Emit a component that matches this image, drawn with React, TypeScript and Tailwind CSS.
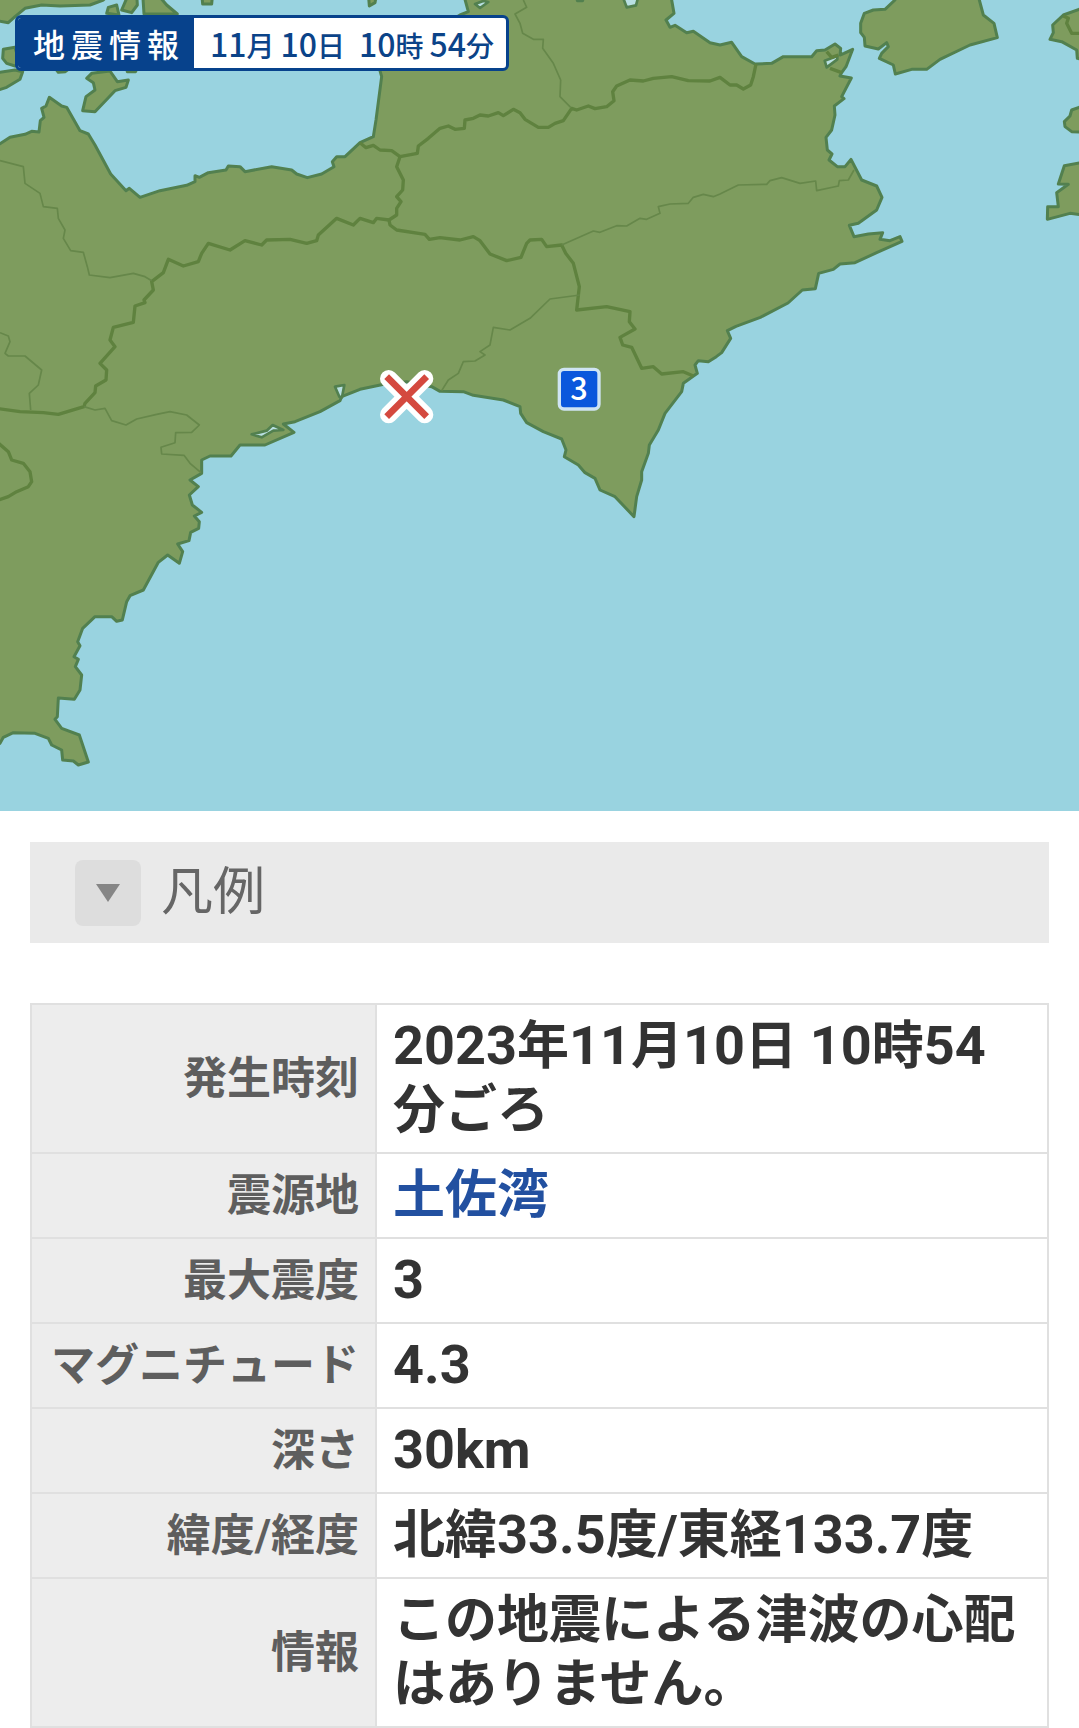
import { useState } from "react";

interface QuakeRow {
  label: string;
  value: string;
  href?: string;
}

const rows: QuakeRow[] = [
  { label: "発生時刻", value: "2023年11月10日 10時54分ごろ" },
  { label: "震源地", value: "土佐湾", href: "#tosa" },
  { label: "最大震度", value: "3" },
  { label: "マグニチュード", value: "4.3" },
  { label: "深さ", value: "30km" },
  { label: "緯度/経度", value: "北緯33.5度/東経133.7度" },
  { label: "情報", value: "この地震による津波の心配はありません。" },
];

const dateParts = [
  { num: "11", unit: "月" },
  { num: "10", unit: "日" },
];

const timeParts = [
  { num: "10", unit: "時" },
  { num: "54", unit: "分" },
];

// Land masses, three map units to one pixel at full width
const land = [
  // Shikoku
  "-20,431 0,431 30,412 75,403 95,394 117,396 121,362 132,352 125,325 138,318 148,292 185,318 200,322 240,392 265,402 285,435 332,522 378,572 388,565 420,592 480,572 560,556 585,545 585,527 598,532 625,518 678,510 685,498 720,500 735,515 815,500 875,510 890,522 922,533 965,522 1002,500 997,485 1010,470 1035,470 1080,428 1120,410 1128,360 1145,230 1138,205 1250,120 1380,45 1405,35 1390,-20 2010,-20 2015,0 2022,40 1998,60 2010,82 2025,76 2060,98 2080,94 2130,128 2160,135 2195,127 2225,170 2265,192 2315,190 2350,170 2435,170 2450,152 2475,150 2505,132 2522,145 2520,165 2532,160 2558,148 2538,200 2525,218 2520,228 2554,234 2525,290 2532,296 2503,318 2505,345 2495,390 2478,412 2482,450 2496,462 2487,480 2512,500 2535,500 2553,478 2585,540 2630,558 2646,592 2630,630 2575,670 2548,676 2562,710 2605,702 2648,698 2640,718 2670,722 2700,710 2706,724 2630,758 2565,788 2520,792 2500,808 2456,820 2446,866 2407,870 2364,909 2281,952 2208,979 2182,992 2192,1015 2165,1058 2149,1070 2125,1085 2095,1082 2085,1095 2092,1120 2050,1150 2045,1175 1995,1240 1975,1290 1948,1335 1945,1360 1925,1415 1925,1440 1910,1490 1902,1550 1845,1490 1800,1470 1785,1435 1755,1418 1735,1395 1693,1370 1698,1350 1685,1317 1630,1295 1580,1268 1562,1240 1560,1220 1510,1200 1420,1186 1390,1175 1320,1174 1295,1160 1220,1145 1155,1152 1080,1168 1025,1190 1020,1202 960,1235 885,1265 850,1272 882,1297 795,1335 720,1335 693,1368 630,1368 605,1380 605,1420 570,1440 595,1460 568,1485 577,1515 605,1537 583,1548 598,1565 596,1585 572,1597 567,1622 533,1632 548,1655 538,1690 503,1665 475,1687 430,1770 390,1787 380,1805 367,1860 350,1864 335,1850 285,1850 248,1885 233,1925 240,1937 222,1970 235,1978 226,2000 245,2025 240,2070 223,2098 175,2094 172,2150 165,2158 185,2185 238,2205 265,2286 235,2295 220,2283 188,2280 185,2250 155,2235 145,2215 105,2200 40,2198 10,2212 0,2230 -20,2240",
  // Seto islands
  "-20,-20 330,-20 310,0 270,15 180,18 125,15 75,25 45,50 25,68 -20,60",
  "320,40 325,22 350,15 357,45",
  "365,30 378,0 378,-20 410,-20 412,15 395,38",
  "428,-20 432,42 532,42 500,15 470,-20",
  "605,-20 638,-20 635,12 608,12",
  "1105,-20 1130,-20 1125,8 1108,18",
  "1730,-20 1750,-20 1748,2 1732,2",
  "10,148 45,142 60,195 45,198 20,190 8,175",
  "-20,215 0,217 45,210 68,215 60,238 20,262 -20,275",
  "168,208 205,208 196,215 175,217",
  "380,205 410,205 407,215 382,215",
  "260,235 275,220 330,213 352,245 385,240 378,262 345,272 285,335 248,332 258,290 285,270 280,248",
  // Awaji
  "2685,-20 2685,0 2655,28 2620,30 2593,40 2582,70 2582,98 2593,112 2595,138 2635,147 2660,128 2665,140 2645,160 2638,175 2680,195 2686,222 2735,208 2780,208 2820,178 2910,135 2992,113 2982,70 2950,45 2938,0 2938,-20",
  // Kii peninsula
  "3260,25 3237,28 3190,45 3158,75 3160,98 3150,118 3185,125 3230,150 3232,175 3260,180",
  "3260,320 3237,322 3215,330 3210,348 3193,365 3195,380 3215,395 3260,397",
  "3260,485 3193,497 3175,552 3205,553 3170,578 3175,620 3143,620 3142,658 3210,640 3260,647",
];

const bays = [
  "1425,12 1450,3 1465,6 1440,24",
  "1868,-10 1880,22 1908,16 1915,-10",
  "2474,182 2512,168 2512,178 2480,202",
  "1005,1160 1033,1155 1026,1192 1018,1190",
  "755,1303 800,1292 818,1275 850,1290 820,1292 785,1312",
];

const prefectureLines = [
  "1080,428 1098,443 1120,436 1140,450 1175,452 1200,470 1252,460 1255,438 1285,415 1320,385 1345,378 1365,388 1393,385 1395,360 1420,355 1440,345 1465,348 1495,338 1510,347 1540,328 1560,338 1575,358 1615,382 1645,382 1665,370 1690,362 1715,325 1730,330 1765,318 1785,326 1820,320 1842,302 1838,275 1850,258 1890,240 1930,243 1960,235 2015,230 2065,242 2130,243 2160,232 2190,255 2210,255 2230,267 2252,255 2260,230 2268,192",
  "1200,470 1190,500 1210,540 1208,570 1190,590 1203,605 1190,625 1190,645 1167,660 1170,675 1190,690 1275,703 1288,718 1320,713 1380,720 1420,710 1440,722 1470,762 1520,782 1563,772 1580,730 1590,720 1625,718 1640,740 1685,735 1697,760 1720,790 1738,860 1730,930 1820,920 1890,935 1888,965 1905,987 1860,1012 1868,1035 1895,1042 1925,1105 1960,1100 1985,1122 2050,1115 2080,1128",
  "1167,660 1130,655 1120,668 1080,655 1060,675 1010,655 955,705 950,722 920,730 870,718 800,720 785,735 735,722 690,750 625,730 605,760 595,785 550,798 505,778 490,818 455,845 460,870 432,900 435,908 405,918 400,967 340,982 330,1020 345,1040 300,1090 320,1110 318,1140 287,1158 285,1178 255,1210 252,1220 175,1243 130,1238 60,1235 -10,1225",
  "-10,1325 25,1355 35,1380 70,1390 90,1415 95,1445 85,1460 50,1475 25,1490 -10,1502",
  "3260,100 3215,100 3200,70 3205,55 3190,48",
  "2480,155 2495,172 2515,165",
  "2490,205 2525,218",
];

const areaLines = [
  "0,482 70,500 75,550 120,580 130,620 172,625 175,655 195,690 190,715 212,752 250,757 262,800 268,825 330,833 400,820 435,830 455,842",
  "0,998 25,1008 30,1025 15,1060 25,1068 75,1068 125,1110 115,1155 88,1180 92,1230",
  "252,1220 285,1230 315,1225 335,1262 378,1275 410,1257 470,1243 510,1235 560,1245 598,1275 575,1297 527,1298 525,1328 483,1342 485,1362 552,1366 570,1390 603,1418",
  "1570,0 1580,22 1545,42 1560,70 1568,100 1600,118 1630,118 1628,145 1660,190 1682,240 1680,290 1712,322",
  "1685,735 1780,693 1800,697 1850,677 1880,678 1920,655 1940,658 1980,640 1975,620 2010,612 2065,610 2080,592 2110,583 2140,590 2160,582 2215,555 2300,553 2310,542 2345,533 2400,550 2447,543 2450,572 2515,558 2518,542 2545,540 2562,510",
  "1740,885 1650,897 1590,955 1530,990 1480,982 1470,1035 1440,1055 1455,1065 1425,1083 1390,1085 1375,1120 1345,1140 1325,1172",
];

function QuakeMap() {
  return (
    <svg viewBox="0 0 3237 2433" className="block w-full bg-[#99d3e0]" role="img" aria-label="震度分布">
      <g fill="#7e9c5e" stroke="#52804f" strokeWidth="9" strokeLinejoin="round">
        {land.map((points) => (
          <polygon key={points} points={points} />
        ))}
      </g>
      <g fill="#b9e0e3" stroke="#52804f" strokeWidth="8" strokeLinejoin="round">
        {bays.map((points) => (
          <polygon key={points} points={points} />
        ))}
      </g>
      <g fill="none" stroke="#5f823f" strokeWidth="10" strokeLinejoin="round">
        {prefectureLines.map((points) => (
          <polyline key={points} points={points} />
        ))}
      </g>
      <g fill="none" stroke="#66874a" strokeWidth="5" strokeLinejoin="round">
        {areaLines.map((points) => (
          <polyline key={points} points={points} />
        ))}
      </g>

      {/* Epicenter */}
      <path d="M1166 1136 1274 1244M1274 1136 1166 1244" stroke="#fff" strokeWidth="52" strokeLinecap="round" />
      <path d="M1160 1130 1280 1250M1280 1130 1160 1250" stroke="#d4493f" strokeWidth="20" />

      {/* Intensity */}
      <rect x="1678" y="1108" width="119" height="119" rx="14" fill="#0a57dc" stroke="#cfe4f3" strokeWidth="10" />
      <text
        x="1737"
        y="1201"
        textAnchor="middle"
        fill="#fff"
        fontSize="92"
        fontWeight="500"
        fontFamily="'Noto Sans CJK JP', sans-serif"
      >
        3
      </text>
    </svg>
  );
}

function DateGroup({ parts }: { parts: { num: string; unit: string }[] }) {
  return (
    <span className="flex gap-1.5">
      {parts.map((part) => (
        <span key={part.unit} className="whitespace-nowrap">
          {part.num}
          <span className="text-[28px]">{part.unit}</span>
        </span>
      ))}
    </span>
  );
}

// Latin runs are set slightly larger than the kanji around them
function MixedText({ text }: { text: string }) {
  return (
    <>
      {text.split(/([0-9a-z./]+)/).map((part, index) =>
        index % 2 === 1 ? (
          <span key={index} className="text-[54px] leading-none">
            {part}
          </span>
        ) : (
          part
        )
      )}
    </>
  );
}

export default function App() {
  const [open, setOpen] = useState(false);

  return (
    <main className="bg-white font-[Roboto,'Noto_Sans_CJK_JP',sans-serif]" lang="ja">
      <section className="relative">
        <QuakeMap />
        <h1 className="absolute left-[15px] top-[15px] flex h-14 items-stretch overflow-hidden rounded-md border-[3px] border-[#07428c] bg-white font-['Noto_Sans_CJK_JP',sans-serif] text-[32px] leading-[50px] font-medium text-[#0b4388]">
          <span className="flex gap-1.5 bg-[#07428c] px-[15px] text-white">
            {["地", "震", "情", "報"].map((char) => (
              <span key={char}>{char}</span>
            ))}
          </span>
          <span className="flex gap-3.5 px-4 pr-3">
            <DateGroup parts={dateParts} />
            <DateGroup parts={timeParts} />
          </span>
        </h1>
      </section>

      <section className="px-[30px] pt-[31px]">
        <div className="flex items-center gap-5 bg-[#eaeaea] px-[45px] py-[17px]">
          <button
            type="button"
            id="legend-toggle"
            aria-expanded={open}
            aria-labelledby="legend-label"
            onClick={() => setOpen(!open)}
            className="flex size-[66px] items-center justify-center rounded-lg bg-[#dddddd]"
          >
            <svg viewBox="0 0 24 18" className="w-6" fill="#868686">
              <path d="M0 0H24L12 18Z" />
            </svg>
          </button>
          <label
            id="legend-label"
            htmlFor="legend-toggle"
            className="text-[52px] leading-[67px] text-[#666666]"
          >
            凡例
          </label>
        </div>

        <table className="mt-[60px] w-full border-collapse">
          <tbody>
            {rows.map((row) => (
              <tr key={row.label}>
                <th
                  scope="row"
                  className="w-[345px] border-2 border-[#e0e0e0] bg-[#ededed] px-4 text-right text-[44px] leading-[64px] font-bold whitespace-nowrap text-[#5e5e5e]"
                >
                  {row.label}
                </th>
                <td className="border-2 border-[#e0e0e0] px-4 pt-[10px] pb-[9px] text-[52px] leading-[64px] font-bold break-all text-[#333333]">
                  {row.href ? (
                    <a href={row.href} className="text-[#2250a0]">
                      {row.value}
                    </a>
                  ) : (
                    <MixedText text={row.value} />
                  )}
                </td>
              </tr>
            ))}
          </tbody>
        </table>
      </section>
    </main>
  );
}
